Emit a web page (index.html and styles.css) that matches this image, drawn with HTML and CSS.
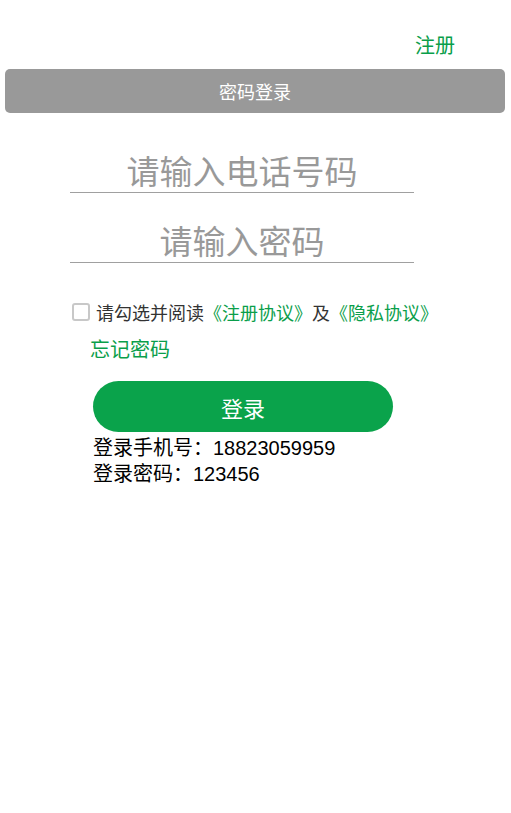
FILE: index.html
```html
<!DOCTYPE html>
<html lang="zh-CN">
<head>
<meta charset="utf-8">
<title>密码登录</title>
<link rel="stylesheet" href="styles.css">
</head>
<body>
<div class="top"><a class="register" href="#">注册</a></div>
<div class="title-bar">密码登录</div>
<form class="form">
  <input class="field field-phone" type="text" placeholder="请输入电话号码">
  <input class="field field-pwd" type="password" placeholder="请输入密码">
  <label class="agree">
    <span class="check"></span>
    <span class="agree-text">请勾选并阅读<a class="link" href="#">《注册协议》</a>及<a class="link" href="#">《隐私协议》</a></span>
  </label>
  <a class="forgot" href="#">忘记密码</a>
  <button class="login" type="button">登录</button>
  <div class="info">
    <div class="info-line">登录手机号：18823059959</div>
    <div class="info-line">登录密码：123456</div>
  </div>
</form>
</body>
</html>
```
FILE: styles.css
```css
* { box-sizing: border-box; }
body {
  margin: 0;
  font-family: "Noto Sans CJK SC", "Noto Sans", sans-serif;
  background: #fff;
  color: #000;
}
a { text-decoration: none; }
.top {
  display: flex;
  justify-content: flex-end;
  padding: 30px 56px 0 0;
  height: 69px;
}
.register {
  color: #0a9e4a;
  font-size: 20px;
  line-height: 30px;
}
.title-bar {
  margin: 0 6px 0 5px;
  height: 44px;
  border-radius: 5px;
  background: #999999;
  color: #fff;
  font-size: 18px;
  display: flex;
  align-items: center;
  justify-content: center;
}
.form {
  display: flex;
  flex-direction: column;
  align-items: flex-start;
  margin: 0 0 0 70px;
  width: 344px;
}
.field {
  width: 344px;
  height: 51px;
  padding: 6px 0 0;
  border: none;
  border-bottom: 1px solid #a0a0a0;
  outline: none;
  text-align: center;
  font-family: "Noto Sans CJK SC", sans-serif;
  font-size: 33px;
  color: #333;
  background: transparent;
}
.field::placeholder { color: #999; }
.field-phone { margin-top: 29px; }
.field-pwd { margin-top: 19px; }
.agree {
  display: flex;
  align-items: center;
  margin: 37px 0 0 2px;
  height: 24px;
  font-size: 18px;
  color: #333;
  white-space: nowrap;
}
.check {
  width: 18px;
  height: 18px;
  border: 2px solid #c8c8c8;
  border-radius: 3px;
  margin-right: 6px;
  flex: none;
}
.link { color: #0a9e4a; }
.forgot {
  margin: 12px 0 0 20px;
  font-size: 20px;
  line-height: 26px;
  color: #0a9e4a;
}
.login {
  margin: 19px 0 0 23px;
  width: 300px;
  height: 51px;
  border: none;
  border-radius: 26px;
  background: #0aa34b;
  color: #fff;
  font-family: "Noto Sans CJK SC", sans-serif;
  font-size: 22px;
}
.info {
  margin: 3px 0 0 23px;
  font-family: "Liberation Sans", "Noto Sans CJK SC", sans-serif;
  font-size: 20px;
  color: #000;
}
.info-line {
  height: 26px;
  line-height: 26px;
}
```
